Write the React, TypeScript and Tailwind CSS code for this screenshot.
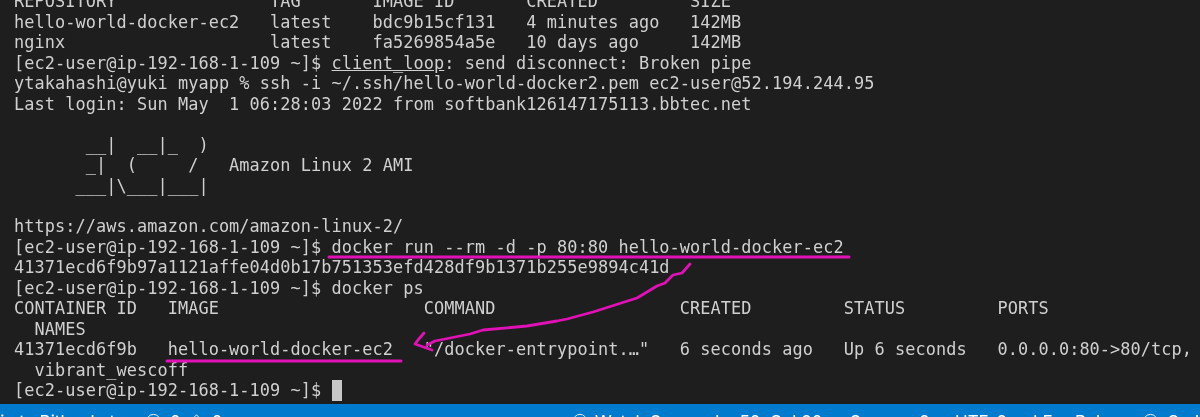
import { Circle, CircleDot, CircleX, TriangleAlert } from "lucide-react";

const lines = [
  "REPOSITORY               TAG       IMAGE ID       CREATED         SIZE",
  "hello-world-docker-ec2   latest    bdc9b15cf131   4 minutes ago   142MB",
  "nginx                    latest    fa5269854a5e   10 days ago     142MB",
];

const Line = ({ children }: { children?: React.ReactNode }) => (
  <div className="h-[20.47px] whitespace-pre leading-[20.47px]">{children}</div>
);

const Ink = () => (
  <svg className="absolute left-0 top-0" width="1200" height="417" fill="none" stroke="#e011b5" strokeLinecap="round" strokeLinejoin="round">
    <path d="M329 257H849" strokeWidth="3" />
    <path d="M167 361H401" strokeWidth="3" />
    <path d="M690 264L682 273 673 275 665 283 657 286 637 298 593 312 567 319 557 321 527 326 483 330 470 334 435 341 427 345" strokeWidth="2.8" />
    <path d="M424 333L418 340 415 344 432 350" strokeWidth="2.8" />
  </svg>
);

export default function App() {
  return (
    <div className="relative flex h-[417px] w-[1200px] flex-col overflow-hidden bg-[#1e1e1e]">
      <div className="h-[404px] overflow-hidden pl-[14px] font-['DejaVu_Sans_Mono',monospace] text-[16.9px] tracking-[0.075px] text-[#d0d0d0] blur-[0.4px]">
        <div className="-mt-[8.7px]">
          {lines.map((l) => (
            <Line key={l}>{l}</Line>
          ))}
          <Line>
            {"[ec2-user@ip-192-168-1-109 ~]$ "}
            <span className="underline">client_loop</span>
            {": send disconnect: Broken pipe"}
          </Line>
          <Line>ytakahashi@yuki myapp % ssh -i ~/.ssh/hello-world-docker2.pem ec2-user@52.194.244.95</Line>
          <Line>Last login: Sun May  1 06:28:03 2022 from softbank126147175113.bbtec.net</Line>
          <Line />
          <Line>{"       __|  __|_  )"}</Line>
          <Line>{"       _|  (     /   Amazon Linux 2 AMI"}</Line>
          <Line>{"      ___|\\___|___|"}</Line>
          <Line />
          <Line>https://aws.amazon.com/amazon-linux-2/</Line>
          <Line>[ec2-user@ip-192-168-1-109 ~]$ docker run --rm -d -p 80:80 hello-world-docker-ec2</Line>
          <Line>41371ecd6f9b97a1121affe04d0b17b751353efd428df9b1371b255e9894c41d</Line>
          <Line>[ec2-user@ip-192-168-1-109 ~]$ docker ps</Line>
          <Line>CONTAINER ID   IMAGE                    COMMAND                  CREATED         STATUS         PORTS</Line>
          <Line>  NAMES</Line>
          <Line>{'41371ecd6f9b   hello-world-docker-ec2   "/docker-entrypoint.…"   6 seconds ago   Up 6 seconds   0.0.0.0:80->80/tcp,'}</Line>
          <Line>  vibrant_wescoff</Line>
          <Line>
            {"[ec2-user@ip-192-168-1-109 ~]$ "}
            <span className="inline-block h-[21px] w-[10px] bg-[#c8c8c8] align-top" />
          </Line>
        </div>
      </div>
      <div className="flex h-[13px] items-start justify-between overflow-hidden whitespace-pre bg-[#007acc] pt-[9px] font-['Inter',sans-serif] text-[17px] leading-[24px] text-white blur-[0.3px]">
        <div className="flex h-[24px] items-start">
          <span className="-ml-[40px] -mt-[3px] w-[185px] shrink-0">Sign in to Bitbucket</span>
          <CircleX size={17} strokeWidth={1.3} />
          <span className="-mt-[3px] ml-[8px]">0</span>
          <TriangleAlert size={17} strokeWidth={1.3} className="ml-[7px]" />
          <span className="-mt-[3px] ml-[7px]">0</span>
        </div>
        <div className="flex h-[24px] items-start">
          <Circle size={16} strokeWidth={1.3} />
          <span className="-mt-[3px] ml-[7px] w-[120px]">Watch Sass</span>
          <span className="-mt-[3px] w-[135px]">Ln 50, Col 80</span>
          <span className="-mt-[3px] w-[105px]">Spaces: 2</span>
          <span className="-mt-[3px] w-[78px]">UTF-8</span>
          <span className="-mt-[3px] w-[42px]">LF</span>
          <span className="-mt-[3px] w-[67px]">Ruby</span>
          <CircleDot size={17} strokeWidth={1.3} />
          <span className="-mt-[3px] ml-[8px] w-[33px] overflow-hidden">Go Live</span>
        </div>
      </div>
      <Ink />
    </div>
  );
}
